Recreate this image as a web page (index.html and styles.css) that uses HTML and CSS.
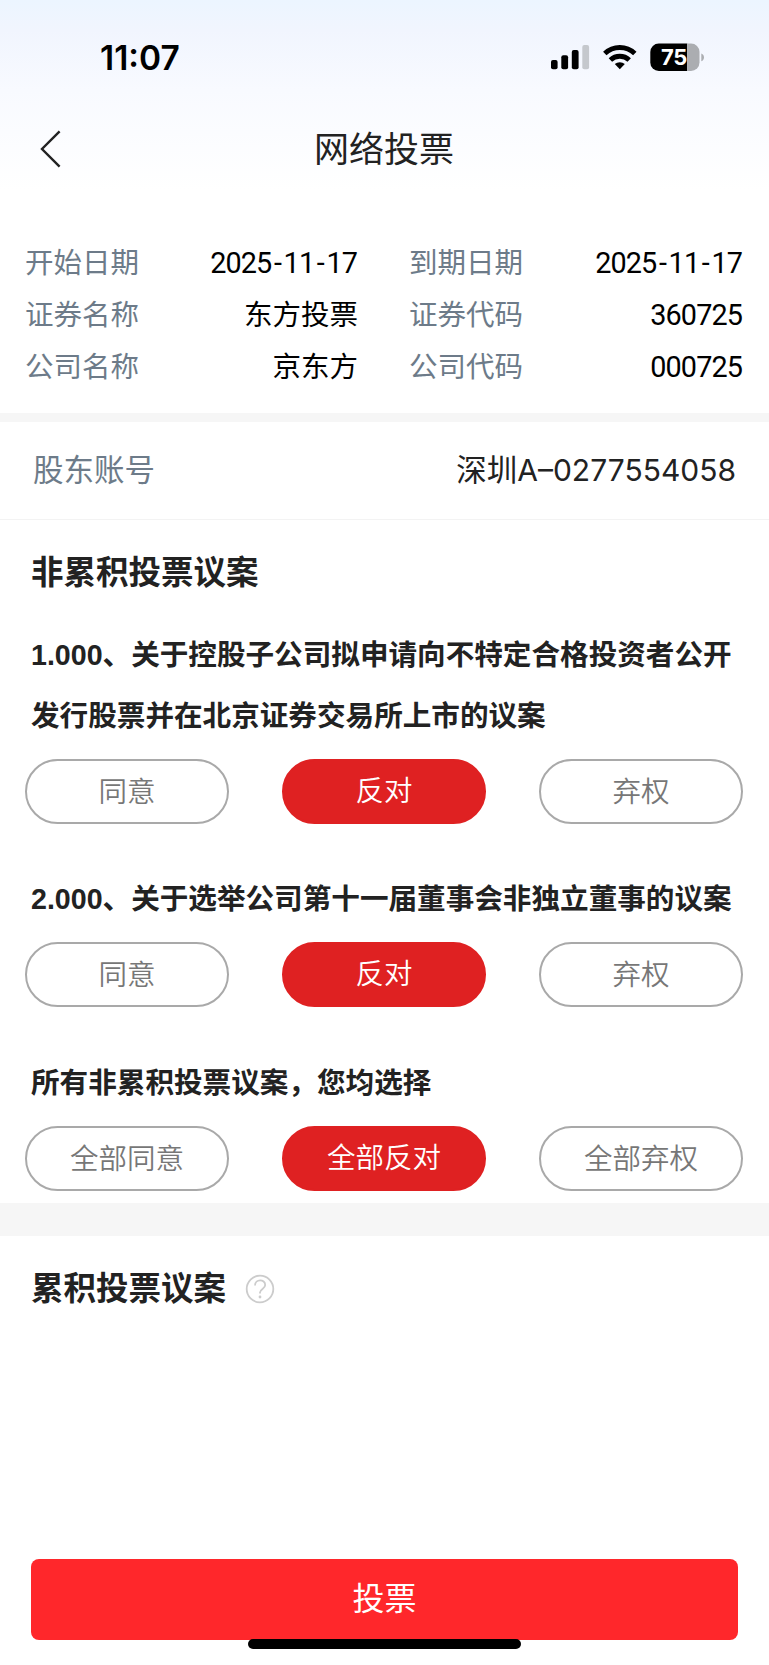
FILE: index.html
```html
<!DOCTYPE html>
<html lang="zh-CN">
<head>
<meta charset="utf-8">
<title>网络投票</title>
<link rel="stylesheet" href="styles.css">
</head>
<body>
<div class="screen">
  <header class="top">
    <div class="status">
      <span class="time">11:07</span>
      <svg class="status-icons" width="156" height="30" viewBox="550 42 156 30">
        <rect x="551" y="60" width="6.6" height="9.3" rx="2"/>
        <rect x="561.3" y="55.3" width="6.8" height="14" rx="2"/>
        <rect x="571.8" y="50" width="6.8" height="19.3" rx="2"/>
        <rect x="582.3" y="45" width="6.8" height="24.3" rx="2" fill="#c5c8cd"/>
        <g fill="none" stroke="#000" stroke-width="4.9">
          <path d="M604.8 53.6a21.6 21.6 0 0 1 30 0"/>
          <path d="M610.4 60a13.6 13.6 0 0 1 18.8 0"/>
        </g>
        <path d="M619.8 69.3l-5-5.2a7.6 7.6 0 0 1 10 0z"/>
        <clipPath id="cell"><rect x="650.3" y="43.6" width="49.2" height="27.4" rx="8.5"/></clipPath>
        <g clip-path="url(#cell)">
          <rect x="650" y="43" width="37.2" height="29"/>
          <rect x="687.2" y="43" width="13" height="29" fill="#abadb1"/>
        </g>
        <path d="M701.3 53.4c3.6 1.2 3.6 6.6 0 7.8z" fill="#abadb1"/>
        <text class="charge" x="674" y="65.3" text-anchor="middle">75</text>
      </svg>
    </div>
    <nav class="nav">
      <svg class="back" width="24" height="40" viewBox="0 0 24 40" fill="none" stroke="#222" stroke-width="2.4"><path d="M20.6 2.4L3 20l17.6 17.6"/></svg>
      <h1 class="title">网络投票</h1>
    </nav>
  </header>

  <section class="info">
    <div class="pair"><span class="label">开始日期</span><span class="num">2025<i>-</i>11<i>-</i>17</span></div>
    <div class="pair"><span class="label">到期日期</span><span class="num">2025<i>-</i>11<i>-</i>17</span></div>
    <div class="pair"><span class="label">证券名称</span><span>东方投票</span></div>
    <div class="pair"><span class="label">证券代码</span><span class="num">360725</span></div>
    <div class="pair"><span class="label">公司名称</span><span>京东方</span></div>
    <div class="pair"><span class="label">公司代码</span><span class="num">000725</span></div>
  </section>

  <section class="account">
    <span class="label">股东账号</span>
    <span class="account-no">深圳<b>A–0277554058</b></span>
  </section>

  <section class="motions">
    <h2 class="heading">非累积投票议案</h2>
    <div class="motion">
      <p class="text">1.000、关于控股子公司拟申请向不特定合格投资者公开<br>发行股票并在北京证券交易所上市的议案</p>
      <div class="options"><button class="option">同意</button><button class="option on">反对</button><button class="option">弃权</button></div>
    </div>
    <div class="motion">
      <p class="text">2.000、关于选举公司第十一届董事会非独立董事的议案</p>
      <div class="options"><button class="option">同意</button><button class="option on">反对</button><button class="option">弃权</button></div>
    </div>
    <div class="motion">
      <p class="text">所有非累积投票议案，您均选择</p>
      <div class="options"><button class="option">全部同意</button><button class="option on">全部反对</button><button class="option">全部弃权</button></div>
    </div>
  </section>

  <section class="cumulative">
    <h2 class="heading">累积投票议案</h2>
    <svg width="30" height="30" viewBox="0 0 30 30" fill="none" stroke="#ccc" stroke-width="1.8"><circle cx="15" cy="15" r="13.3"/><path d="M10 11.5C10 4.8 20.2 4.8 20.2 11c0 3.8-5.2 4-5.2 7.5v1"/><circle cx="15" cy="23" r="1.4" fill="#ccc" stroke="none"/></svg>
  </section>

  <footer class="footer">
    <button class="submit">投票</button>
    <div class="home"></div>
  </footer>
</div>
</body>
</html>
```

FILE: styles.css
```css
* { box-sizing: border-box; }
body { margin: 0; background: #fff; }
.screen {
  width: 769px;
  height: 1665px;
  display: flex;
  flex-direction: column;
  background: linear-gradient(#ecf5ff 0, #f1f5fe 30px, #f8faff 90px, #fff 190px);
  font-family: "Liberation Sans", "Noto Sans CJK SC", sans-serif;
  color: #222;
  overflow: hidden;
}
h1, h2, p { margin: 0; }
button { font-family: inherit; padding: 0; margin: 0; }

.top { height: 230px; flex: none; }
.status {
  height: 114px;
  padding: 0 63px 0 100px;
  display: flex;
  align-items: center;
  justify-content: space-between;
}
.time { font: 600 33.5px/40px Inter, sans-serif; color: #000; padding-top: 2px; }
.charge { font: 700 22px Inter, sans-serif; letter-spacing: -0.4px; fill: #fff; }
.nav {
  height: 70px;
  padding: 0 39px;
  display: grid;
  grid-template-columns: 24px 1fr 24px;
  align-items: center;
}
.title { font-size: 35px; font-weight: 400; line-height: 50px; text-align: center; padding-top: 2px; margin-left: -1px; }

.info {
  height: 183px;
  flex: none;
  padding: 7px 25px 0;
  display: grid;
  grid-template-columns: 333px 334px;
  grid-auto-rows: 52px;
  column-gap: 51px;
  font-size: 28.5px;
  color: #000;
}
.pair { display: flex; align-items: center; justify-content: space-between; line-height: 52px; }
.label { color: #6d7b89; }
.num { font-family: Roboto, sans-serif; font-size: 28.8px; letter-spacing: -0.9px; padding: 0 1px 1px 0; }
.num i { font-style: normal; padding: 0 2.5px 0 2.7px; }

.account {
  height: 107px;
  flex: none;
  border-top: 9px solid #f6f6f6;
  border-bottom: 1px solid #f3f3f3;
  padding: 0 33px 2px;
  display: flex;
  align-items: center;
  justify-content: space-between;
  font-size: 30.5px;
  line-height: 44px;
  white-space: nowrap;
}
.account-no b { font: 400 30px/44px Inter, sans-serif; }

.motions { height: 683px; flex: none; padding-top: 28px; }
.heading { font-size: 32.5px; font-weight: 700; line-height: 50px; }
.motions .heading { padding-left: 31px; }
.text { font-size: 28.6px; font-weight: 700; line-height: 60.5px; padding-left: 31px; white-space: nowrap; }
.motion { height: 184px; }
.motion:nth-of-type(1) { height: 243.5px; margin-top: 27px; }
.options { display: flex; justify-content: space-between; padding: 0 26px 0 25px; margin-top: 12.5px; }
.option {
  width: 204px;
  height: 65px;
  border: 2px solid #a9a9a9;
  border-radius: 33px;
  background: #fff;
  color: #777;
  font-size: 28.5px;
  font-weight: 350;
  line-height: 61px;
  padding-top: 1px;
}
.option.on { background: #df2122; border-color: #df2122; color: #fff; padding: 0 0 1px; }

.cumulative {
  height: 120px;
  flex: none;
  border-top: 33px solid #f6f6f6;
  padding: 18px 0 0 31px;
  display: flex;
  align-items: center;
  gap: 19px;
}

.footer { margin-top: auto; height: 106px; display: flex; flex-direction: column; align-items: center; }
.submit {
  width: 707px;
  height: 81px;
  flex: none;
  border: 0;
  border-radius: 8px;
  background: #ff272b;
  color: #fff;
  font-size: 32px;
  padding-bottom: 7px;
}
.home { width: 273px; height: 10px; margin-top: -1px; border-radius: 5px; background: #000; z-index: 1; }
```
